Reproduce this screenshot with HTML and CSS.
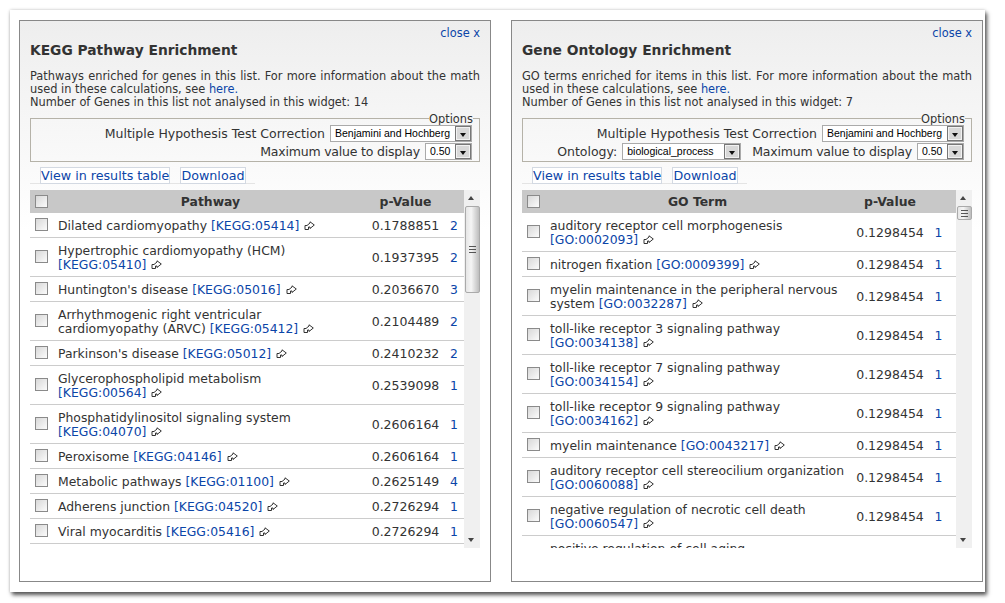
FILE: index.html
```html
<!DOCTYPE html>
<html lang="en">
<head>
    <meta charset="UTF-8">
    <meta name="viewport" content="width=device-width, initial-scale=1.0">
    <title>Enrichment widgets</title>
    <link rel="stylesheet" href="styles.css">
</head>

<body>
    <svg class="defs" width="0" height="0">
        <symbol id="ext" viewBox="0 0 11 10">
            <path d="M1 4.500H3L6 2V0.800L10.300 4 6 7.500V6H4.500V8.500H1Z" fill="#fff" stroke="#333" stroke-width="1"/>
        </symbol>
    </svg>
    <div class="window">
        <!--kegg widget-->
        <div class="widget">
            <a class="close" href="#">close x</a>
            <h3>KEGG Pathway Enrichment</h3>
            <p class="desc">Pathways enriched for genes in this list. For more information about the math used in these calculations, see <a href="#">here.</a><br>Number of Genes in this list not analysed in this widget: 14</p>
            <fieldset class="options">
                <legend>Options</legend>
                <div class="opt-row">
                    <label>Multiple Hypothesis Test Correction</label>
                    <span class="select select-wide">Benjamini and Hochberg<i class="drop"></i></span>
                </div>
                <div class="opt-row">
                    <label class="label-max">Maximum value to display</label>
                    <span class="select select-num">0.50<i class="drop"></i></span>
                </div>
            </fieldset>
            <div class="actions">
                <a href="#">View in results table</a>
                <a href="#">Download</a>
            </div>
            <div class="results">
                <div class="scroll-view">
                    <table class="kegg">
                        <thead>
                            <tr><th class="c-check"><input type="checkbox"></th><th class="c-name">Pathway</th><th class="c-p">p-Value</th><th class="c-n"></th></tr>
                        </thead>
                        <tbody>
                            <tr><td class="c-check"><input type="checkbox"></td><td>Dilated cardiomyopathy <span class="ref"><a href="#">[KEGG:05414]</a> <svg class="ext"><use href="#ext"/></svg></span></td><td class="c-p">0.1788851</td><td class="c-n"><a href="#">2</a></td></tr>
                            <tr><td class="c-check"><input type="checkbox"></td><td>Hypertrophic cardiomyopathy (HCM) <span class="ref"><a href="#">[KEGG:05410]</a> <svg class="ext"><use href="#ext"/></svg></span></td><td class="c-p">0.1937395</td><td class="c-n"><a href="#">2</a></td></tr>
                            <tr><td class="c-check"><input type="checkbox"></td><td>Huntington's disease <span class="ref"><a href="#">[KEGG:05016]</a> <svg class="ext"><use href="#ext"/></svg></span></td><td class="c-p">0.2036670</td><td class="c-n"><a href="#">3</a></td></tr>
                            <tr><td class="c-check"><input type="checkbox"></td><td>Arrhythmogenic right ventricular<br>cardiomyopathy (ARVC) <span class="ref"><a href="#">[KEGG:05412]</a> <svg class="ext"><use href="#ext"/></svg></span></td><td class="c-p">0.2104489</td><td class="c-n"><a href="#">2</a></td></tr>
                            <tr><td class="c-check"><input type="checkbox"></td><td>Parkinson's disease <span class="ref"><a href="#">[KEGG:05012]</a> <svg class="ext"><use href="#ext"/></svg></span></td><td class="c-p">0.2410232</td><td class="c-n"><a href="#">2</a></td></tr>
                            <tr><td class="c-check"><input type="checkbox"></td><td>Glycerophospholipid metabolism <br><span class="ref"><a href="#">[KEGG:00564]</a> <svg class="ext"><use href="#ext"/></svg></span></td><td class="c-p">0.2539098</td><td class="c-n"><a href="#">1</a></td></tr>
                            <tr><td class="c-check"><input type="checkbox"></td><td>Phosphatidylinositol signaling system <span class="ref"><a href="#">[KEGG:04070]</a> <svg class="ext"><use href="#ext"/></svg></span></td><td class="c-p">0.2606164</td><td class="c-n"><a href="#">1</a></td></tr>
                            <tr><td class="c-check"><input type="checkbox"></td><td>Peroxisome <span class="ref"><a href="#">[KEGG:04146]</a> <svg class="ext"><use href="#ext"/></svg></span></td><td class="c-p">0.2606164</td><td class="c-n"><a href="#">1</a></td></tr>
                            <tr><td class="c-check"><input type="checkbox"></td><td>Metabolic pathways <span class="ref"><a href="#">[KEGG:01100]</a> <svg class="ext"><use href="#ext"/></svg></span></td><td class="c-p">0.2625149</td><td class="c-n"><a href="#">4</a></td></tr>
                            <tr><td class="c-check"><input type="checkbox"></td><td>Adherens junction <span class="ref"><a href="#">[KEGG:04520]</a> <svg class="ext"><use href="#ext"/></svg></span></td><td class="c-p">0.2726294</td><td class="c-n"><a href="#">1</a></td></tr>
                            <tr><td class="c-check"><input type="checkbox"></td><td>Viral myocarditis <span class="ref"><a href="#">[KEGG:05416]</a> <svg class="ext"><use href="#ext"/></svg></span></td><td class="c-p">0.2726294</td><td class="c-n"><a href="#">1</a></td></tr>
                        </tbody>
                    </table>
                </div>
                <div class="scrollbar">
                    <i class="arrow-up"></i>
                    <div class="track"><div class="thumb thumb-kegg"><b class="grip"></b></div></div>
                    <i class="arrow-down"></i>
                </div>
            </div>
        </div>

        <!--go widget-->
        <div class="widget">
            <a class="close" href="#">close x</a>
            <h3>Gene Ontology Enrichment</h3>
            <p class="desc">GO terms enriched for items in this list. For more information about the math used in these calculations, see <a href="#">here.</a><br>Number of Genes in this list not analysed in this widget: 7</p>
            <fieldset class="options">
                <legend>Options</legend>
                <div class="opt-row">
                    <label>Multiple Hypothesis Test Correction</label>
                    <span class="select select-wide">Benjamini and Hochberg<i class="drop"></i></span>
                </div>
                <div class="opt-row">
                    <label>Ontology:</label>
                    <span class="select select-onto">biological_process<i class="drop"></i></span>
                    <label class="label-max label-gap">Maximum value to display</label>
                    <span class="select select-num">0.50<i class="drop"></i></span>
                </div>
            </fieldset>
            <div class="actions">
                <a href="#">View in results table</a>
                <a href="#">Download</a>
            </div>
            <div class="results">
                <div class="scroll-view">
                    <table class="go">
                        <thead>
                            <tr><th class="c-check"><input type="checkbox"></th><th class="c-name">GO Term</th><th class="c-p">p-Value</th><th class="c-n"></th></tr>
                        </thead>
                        <tbody>
                            <tr><td class="c-check"><input type="checkbox"></td><td>auditory receptor cell morphogenesis <span class="ref"><a href="#">[GO:0002093]</a> <svg class="ext"><use href="#ext"/></svg></span></td><td class="c-p">0.1298454</td><td class="c-n"><a href="#">1</a></td></tr>
                            <tr><td class="c-check"><input type="checkbox"></td><td>nitrogen fixation <span class="ref"><a href="#">[GO:0009399]</a> <svg class="ext"><use href="#ext"/></svg></span></td><td class="c-p">0.1298454</td><td class="c-n"><a href="#">1</a></td></tr>
                            <tr><td class="c-check"><input type="checkbox"></td><td>myelin maintenance in the peripheral nervous system <span class="ref"><a href="#">[GO:0032287]</a> <svg class="ext"><use href="#ext"/></svg></span></td><td class="c-p">0.1298454</td><td class="c-n"><a href="#">1</a></td></tr>
                            <tr><td class="c-check"><input type="checkbox"></td><td>toll-like receptor 3 signaling pathway <span class="ref"><a href="#">[GO:0034138]</a> <svg class="ext"><use href="#ext"/></svg></span></td><td class="c-p">0.1298454</td><td class="c-n"><a href="#">1</a></td></tr>
                            <tr><td class="c-check"><input type="checkbox"></td><td>toll-like receptor 7 signaling pathway <span class="ref"><a href="#">[GO:0034154]</a> <svg class="ext"><use href="#ext"/></svg></span></td><td class="c-p">0.1298454</td><td class="c-n"><a href="#">1</a></td></tr>
                            <tr><td class="c-check"><input type="checkbox"></td><td>toll-like receptor 9 signaling pathway <span class="ref"><a href="#">[GO:0034162]</a> <svg class="ext"><use href="#ext"/></svg></span></td><td class="c-p">0.1298454</td><td class="c-n"><a href="#">1</a></td></tr>
                            <tr><td class="c-check"><input type="checkbox"></td><td>myelin maintenance <span class="ref"><a href="#">[GO:0043217]</a> <svg class="ext"><use href="#ext"/></svg></span></td><td class="c-p">0.1298454</td><td class="c-n"><a href="#">1</a></td></tr>
                            <tr><td class="c-check"><input type="checkbox"></td><td>auditory receptor cell stereocilium organization <span class="ref"><a href="#">[GO:0060088]</a> <svg class="ext"><use href="#ext"/></svg></span></td><td class="c-p">0.1298454</td><td class="c-n"><a href="#">1</a></td></tr>
                            <tr><td class="c-check"><input type="checkbox"></td><td>negative regulation of necrotic cell death <span class="ref"><a href="#">[GO:0060547]</a> <svg class="ext"><use href="#ext"/></svg></span></td><td class="c-p">0.1298454</td><td class="c-n"><a href="#">1</a></td></tr>
                            <tr><td class="c-check"><input type="checkbox"></td><td>positive regulation of cell aging <br><span class="ref"><a href="#">[GO:0090343]</a> <svg class="ext"><use href="#ext"/></svg></span></td><td class="c-p">0.1298454</td><td class="c-n"><a href="#">1</a></td></tr>
                        </tbody>
                    </table>
                </div>
                <div class="scrollbar">
                    <i class="arrow-up"></i>
                    <div class="track"><div class="thumb thumb-go"><b class="grip"></b></div></div>
                    <i class="arrow-down"></i>
                </div>
            </div>
        </div>
    </div>
</body>
</html>
```

FILE: styles.css
```css
body {
    margin: 0;
    padding: 10px 20px 11px 10px;
    background-color: #fff;
    font-family: "DejaVu Sans", Verdana, sans-serif;
    font-size: 11.400px;
    color: #333;
}
a {
    color: #0b45a8;
    text-decoration: none;
}
.defs {
    position: absolute;
}
.window {
    display: flex;
    gap: 20px;
    width: 966px;
    height: 562px;
    padding: 10px 0 10px 9px;
    background-color: #fff;
    box-shadow: 2px 3px 4px #555, 0 0 3px #ccc;
}
.widget {
    position: relative;
    box-sizing: border-box;
    width: 472px;
    height: 562px;
    padding: 0 10px;
    border: 1px solid #888;
    background: linear-gradient(#eeeeee, #ffffff 210px);
}
.close {
    position: absolute;
    top: 6px;
    right: 10px;
    line-height: 13px;
}
h3 {
    margin: 0;
    padding-top: 21px;
    font-size: 13.800px;
    line-height: 17px;
    color: #333;
}
.desc {
    margin: 11px 0 0;
    line-height: 13px;
    text-align: justify;
}
.options {
    display: flex;
    flex-direction: column;
    box-sizing: border-box;
    height: 49px;
    margin: 4px 0 0;
    padding: 0 7px 0 0;
    border: 1px solid #b5b2a8;
    min-width: 0;
}
.options legend {
    margin-left: auto;
    margin-right: -1px;
    padding: 0;
    font-size: 11.400px;
    line-height: 13px;
    height: 11px;
}
.opt-row {
    display: flex;
    justify-content: flex-end;
    align-items: center;
    gap: 5px;
    height: 18px;
    font-size: 12.500px;
}
.label-max {
    letter-spacing: -0.200px;
}
.label-gap {
    margin-left: 6px;
}
.select {
    position: relative;
    box-sizing: border-box;
    height: 17px;
    padding-left: 4px;
    background-color: #fff;
    border: 1px solid #aaa;
    font-family: "Liberation Sans", Arial, sans-serif;
    font-size: 10.500px;
    line-height: 15px;
    color: #000;
}
.select-wide {
    width: 142px;
}
.select-num {
    width: 47px;
}
.select-onto {
    width: 119px;
}
.drop {
    position: absolute;
    top: 0;
    right: 0;
    width: 16px;
    height: 15px;
    box-sizing: border-box;
    background-color: #d8d8d8;
    border: 1px solid #777;
    box-shadow: inset 0 0 0 1px #f2f2f2;
}
.drop::after {
    content: "";
    position: absolute;
    left: 3.500px;
    top: 6px;
    border-style: solid;
    border-width: 4px 3.500px 0;
    border-color: #111 transparent transparent;
}
.actions {
    display: flex;
    gap: 10px;
    margin-top: 5px;
    padding-left: 10px;
    height: 17px;
    box-shadow: inset 0 -1px 0 #e4e4e4;
    width: 215px;
}
.actions a {
    box-sizing: border-box;
    height: 17px;
    line-height: 15px;
    font-size: 12.700px;
    border: 1px solid #d3d9e2;
    background-color: #fff;
}
.results {
    display: flex;
    height: 358px;
    margin-top: 6px;
}
.scroll-view {
    width: 434px;
    height: 358px;
    overflow: hidden;
}
table {
    width: 434px;
    table-layout: fixed;
    border-collapse: collapse;
    font-size: 12.400px;
    line-height: 14px;
}
th {
    height: 23px;
    padding: 0;
    background-color: #c8c8c8;
    font-size: 12.400px;
}
td {
    padding: 6px 0 4px;
    border-bottom: 1px solid #ccc;
    background-color: #fff;
}
td.c-check {
    padding: 4px 0 6px;
}
input[type="checkbox"] {
    appearance: none;
    display: block;
    box-sizing: border-box;
    width: 13px;
    height: 13px;
    margin: 0 0 0 5px;
    border: 1px solid #8a8a8a;
    background: linear-gradient(135deg, #d8d8d8, #fbfbfb);
}
.ref {
    white-space: nowrap;
}
.c-check {
    width: 28px;
}
.c-p {
    width: 77px;
    text-align: center;
    font-size: 12.500px;
}
th.c-p {
    font-size: 12.400px;
}
.c-n {
    width: 20px;
    text-align: center;
}
.kegg .c-name {
    padding-right: 4px;
}
.go .c-p {
    width: 80px;
}
.go .c-n {
    width: 26px;
    padding-right: 9px;
    box-sizing: border-box;
}
.go .c-name {
    padding-right: 5px;
}
.ext {
    width: 11px;
    height: 10px;
    vertical-align: -1px;
    margin-left: 1px;
}
.scrollbar {
    position: relative;
    display: flex;
    flex-direction: column;
    width: 16px;
    height: 358px;
    background-color: #f0f0f0;
}
.track {
    flex: 1;
}
.arrow-up,
.arrow-down {
    display: block;
    flex: none;
    width: 0;
    margin: 6px 0 6px 4px;
    border-style: solid;
    border-color: #444 transparent;
}
.arrow-up {
    border-width: 0 3.500px 4px;
}
.arrow-down {
    border-width: 4px 3.500px 0;
}
.thumb {
    display: flex;
    justify-content: center;
    align-items: center;
    box-sizing: border-box;
    width: 15px;
    margin-left: 1px;
    border: 1px solid #aaa;
    border-radius: 2px;
    background: linear-gradient(90deg, #e6e6e6, #f5f5f5 40%, #bdbdbd);
}
.thumb-kegg {
    height: 87px;
}
.thumb-go {
    height: 14px;
}
.grip {
    width: 7px;
    height: 7px;
    background: repeating-linear-gradient(#555 0, #555 1px, transparent 1px, transparent 3px);
}
```
